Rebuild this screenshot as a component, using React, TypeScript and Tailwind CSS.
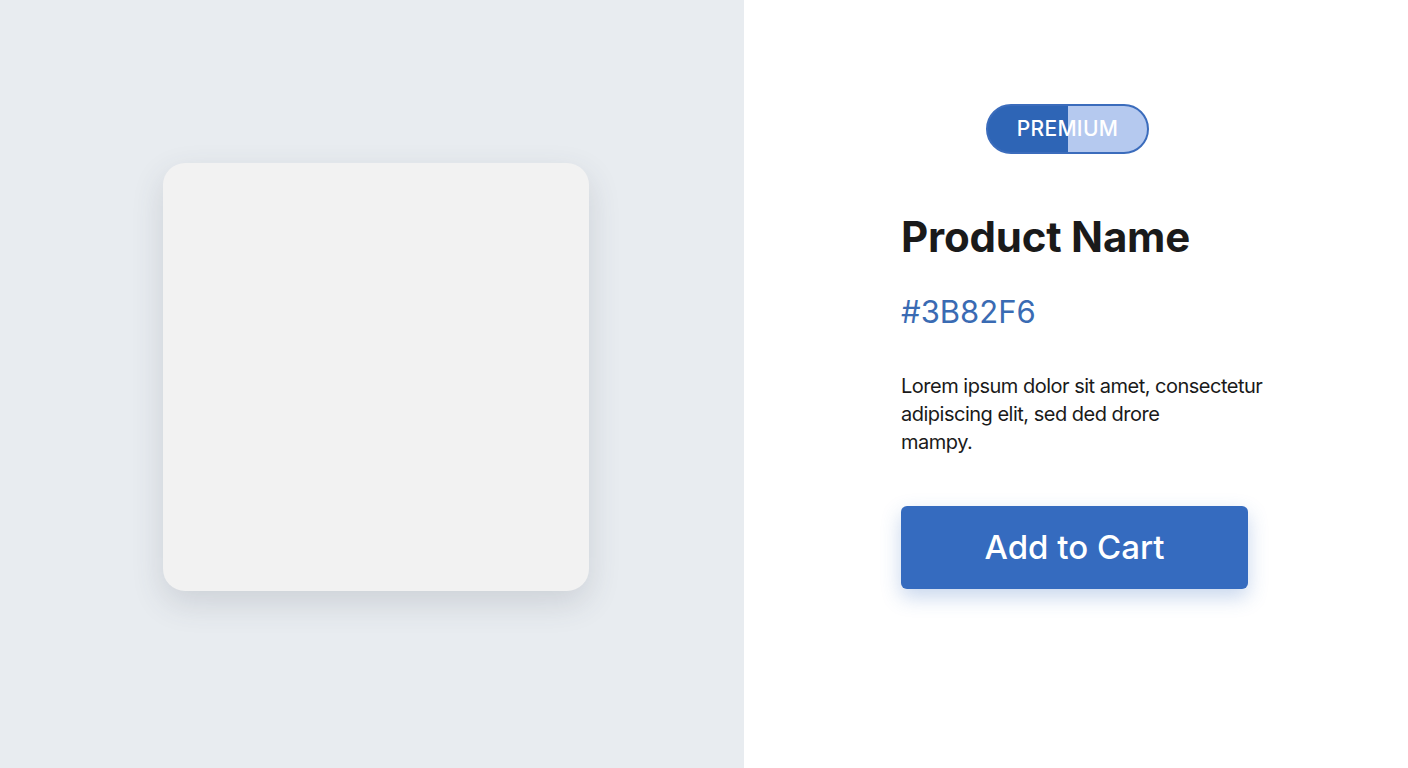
import React from 'react';

export default function App() {
  return (
    <div className="flex h-[768px] w-full font-['Inter','Liberation_Sans',sans-serif]">
      {/* left: image placeholder */}
      <div className="flex w-[744px] shrink-0 items-center justify-center bg-[#e8ecf0] pl-[8px] pb-[14px]">
        <div className="h-[428px] w-[426px] rounded-[22px] bg-[#f2f2f2] shadow-[0_12px_32px_rgba(60,70,90,0.16)]" />
      </div>

      {/* right: product details */}
      <div className="flex flex-1 flex-col bg-white pt-[104px]">
        <div className="flex justify-center pr-[17px]">
          <span className="flex h-[50px] w-[163px] items-center justify-center rounded-full border-2 border-[#3b6cbc] bg-[linear-gradient(90deg,#2e65b6_50%,#b5c9ef_50%)] text-[21px] font-medium tracking-[0.3px] text-white">
            PREMIUM
          </span>
        </div>

        <div className="flex flex-col pl-[157px]">
          <h1 className="mt-[58px] text-[42px] font-bold leading-[50px] tracking-[-0.2px] text-[#1a1a1a]">Product Name</h1>
          <p className="mt-[32px] text-[31px] leading-[36px] text-[#3a6bb3]">#3B82F6</p>
          <p className="mt-[42px] text-[20px] leading-[28px] tracking-[-0.5px] text-[#1a1a1a]">
            Lorem ipsum dolor sit amet, consectetur
            <br />
            adipiscing elit, sed ded drore
            <br />
            mampy.
          </p>
          <button className="mt-[50px] flex h-[83px] w-[347px] items-center justify-center rounded-[6px] bg-[#356bbf] text-[33px] font-medium text-white shadow-[0_8px_20px_rgba(53,107,191,0.28)]">
            Add to Cart
          </button>
        </div>
      </div>
    </div>
  );
}
